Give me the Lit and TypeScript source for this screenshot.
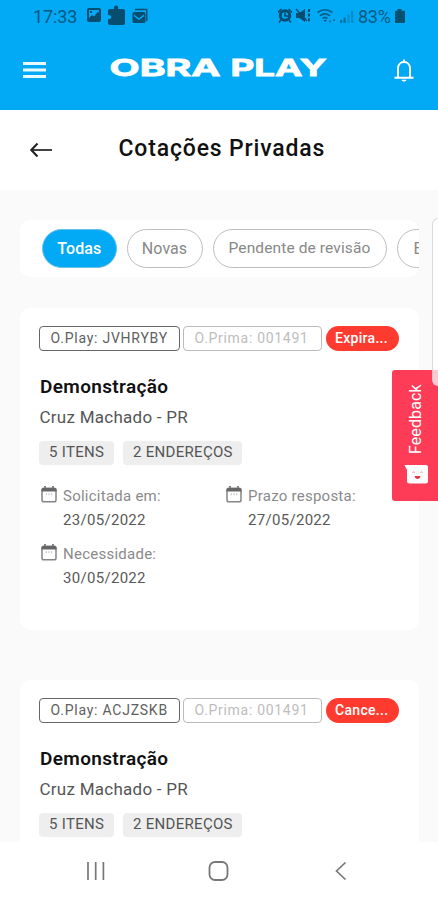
import { LitElement, html, css } from "lit";
import { customElement, property } from "lit/decorators.js";

const calendar = html`<svg width="16" height="17" viewBox="0 0 16 17" fill="none">
  <path d="M4 0v3M12 0v3" stroke="#666" stroke-width="1.6" />
  <rect x="1" y="2.2" width="14" height="13.6" rx="1.8" stroke="#858585" stroke-width="1.5" />
  <path d="M.5 4.100a2 2 0 0 1 2-2h11a2 2 0 0 1 2 2v1.500H.5z" fill="#666" />
  <path d="M5.300 7.200v2M8 7.200v2M10.700 7.200v2" stroke="#bbb" />
</svg>`;

@customElement("quote-card")
export class QuoteCard extends LitElement {
  @property() code = "";
  @property() status = "";

  static styles = css`
    :host { display: block; box-sizing: border-box; height: 322px; padding: 18px 19px 0; background: #fff; border-radius: 10px; }
    .tags { display: flex; height: 25px; }
    .tag { box-sizing: border-box; border: 1px solid #666; border-radius: 4px; font-size: 14px; line-height: 22px; color: #606060; white-space: nowrap; padding-left: 10.5px; }
    .play { width: 140.5px; letter-spacing: .76px; }
    .prima { width: 138.5px; margin-left: 3.500px; border-color: #bbb; color: #bdbdbd; letter-spacing: .7px; }
    .status { width: 73.500px; margin-left: 4px; border-radius: 13px; background: #ff3b2f; color: #fff; font-weight: 500; font-size: 14px; line-height: 24px; padding-left: 9.500px; box-sizing: border-box; letter-spacing: .3px; white-space: nowrap; }
    .name { margin-top: 24px; padding-left: 1px; font-size: 19px; line-height: 24px; font-weight: 600; color: #111; letter-spacing: .35px; }
    .place { margin-top: 6px; padding-left: .5px; font-size: 17px; line-height: 24px; color: #555; letter-spacing: .26px; }
    .chips { display: flex; gap: 9px; margin-top: 12px; }
    .chip { box-sizing: border-box; height: 24px; padding-left: 10px; background: #eee; border-radius: 4px; font-size: 15px; line-height: 23px; color: #555; letter-spacing: .3px; white-space: nowrap; }
    .items { width: 75px; }
    .ends { width: 119px; }
    .dates { display: grid; grid-template-columns: 185px 1fr; row-gap: 10px; margin-top: 19px; }
    .date { display: flex; gap: 6px; padding-left: 2px; font-size: 15px; line-height: 24px; color: #595959; letter-spacing: .3px; }
    .date svg { margin-top: 2px; }
    .label { color: #8a8a8a; letter-spacing: .25px; }
  `;

  private date(label: string, value: string) {
    return html`<div class="date">${calendar}<div><div class="label">${label}</div><div>${value}</div></div></div>`;
  }

  render() {
    return html`
      <div class="tags">
        <div class="tag play">O.Play: ${this.code}</div>
        <div class="tag prima">O.Prima: 001491</div>
        <div class="status">${this.status}</div>
      </div>
      <div class="name">Demonstração</div>
      <div class="place">Cruz Machado - PR</div>
      <div class="chips"><div class="chip items">5 ITENS</div><div class="chip ends">2 ENDEREÇOS</div></div>
      <div class="dates">
        ${this.date("Solicitada em:", "23/05/2022")}
        ${this.date("Prazo resposta:", "27/05/2022")}
        ${this.date("Necessidade:", "30/05/2022")}
      </div>`;
  }
}

@customElement("app-root")
export class AppRoot extends LitElement {
  static styles = css`
    :host { display: flex; flex-direction: column; position: relative; width: 438px; height: 900px; overflow: hidden; background: #fafafa; font-family: Roboto, "Liberation Sans", sans-serif; }
    .top { flex: none; height: 109.500px; background: #02a9f5; }
    .statusbar { display: flex; align-items: center; height: 32px; padding-left: 33px; color: #075980; font-size: 18px; }
    .time { width: 52px; letter-spacing: -.1px; }
    .left { width: 194px; }
    .right { width: 80px; margin-left: -1px; }
    .pct { width: 36px; letter-spacing: -.3px; }
    .appbar { display: flex; align-items: center; height: 76px; padding: 0 24px 0 23px; }
    .menu { width: 23px; }
    .logo { margin-left: 62px; overflow: visible; }
    .logo text { font-family: Inter, sans-serif; font-size: 23.500px; font-weight: 700; fill: #fff; stroke: #fff; stroke-width: .8px; }
    .bell { margin-left: 64px; }
    .title { flex: none; display: flex; align-items: center; box-sizing: border-box; height: 80px; padding-left: 29px; background: #fff; color: #111; }
    .title h1 { margin: 0 0 3px 65.500px; font-size: 23px; font-weight: 500; letter-spacing: .83px; white-space: nowrap; }
    main { flex: 1; min-height: 0; overflow: hidden; display: flex; flex-direction: column; padding: 30.500px 19px 0 20px; }
    .filters { flex: none; display: flex; gap: 10px; box-sizing: border-box; height: 57px; padding: 9px 0 0 22px; margin-bottom: 31px; border-radius: 10px; background: #fff; overflow: hidden; }
    .pill { flex: none; box-sizing: border-box; height: 39px; border: 1px solid #bdbdbd; border-radius: 20px; text-align: center; font-size: 16px; line-height: 37px; color: #888; letter-spacing: .05px; white-space: nowrap; }
    .w1 { width: 74.500px; background: #02a9f5; color: #fff; border-color: #68bfe8; font-weight: 500; }
    .w2 { width: 76px; }
    .w3 { width: 174px; font-size: 15.500px; letter-spacing: .12px; }
    .w4 { width: 90px; text-align: left; padding-left: 16px; }
    quote-card { flex: none; margin-bottom: 50px; }
    nav { flex: none; display: flex; align-items: center; height: 58px; background: #fff; padding-left: 86px; }
    .home { margin-left: 102px; }
    .back { margin-left: 105px; }
    .feedback { position: absolute; right: 0; top: 370px; width: 46px; height: 131px; border-radius: 3px 0 0 3px; background: #ff3c57; color: #fff; display: flex; flex-direction: column; align-items: center; box-sizing: border-box; padding-top: 14px; }
    .feedback span { height: 70px; writing-mode: vertical-rl; transform: rotate(180deg); font-size: 16px; line-height: 20px; text-align: left; letter-spacing: .1px; white-space: nowrap; margin-left: 2px; }
    .feedback svg { margin-top: 10px; margin-left: 2px; }
    .handle { position: absolute; top: 218px; left: 432px; width: 14px; height: 166px; background: rgba(255,255,255,.72); border: 1px solid rgba(205,205,205,.75); border-radius: 6px; }
  `;

  render() {
    return html`
      <div class="top">
        <div class="statusbar">
          <div class="time">17:33</div>
          <svg class="left" width="194" height="26" viewBox="0 0 194 26" fill="#064d70">
            <path fill-rule="evenodd" d="M4 5h10a2 2 0 0 1 2 2v10a2 2 0 0 1-2 2H4a2 2 0 0 1-2-2V7a2 2 0 0 1 2-2zm0 2v8l3-3 2 1.500 4-5L14 10V7zM5 8h2v2H5z" />
            <path d="M25 6h4c-.8-4.600 5-4.600 4.200 0H38a2 2 0 0 1 2 2v12a2 2 0 0 1-2 2H25a2 2 0 0 1-2-2v-4c4 1 5-4.500 0-4V8a2 2 0 0 1 2-2z" />
            <path fill-rule="evenodd" d="M49 9h10a1.500 1.500 0 0 1 1.500 1.500v8A1.500 1.500 0 0 1 59 20H49a1.500 1.500 0 0 1-1.500-1.500v-8A1.500 1.500 0 0 1 49 9zm0 2.500 5 3.700 5-3.700v1.800L54 17l-5-3.700z" />
            <path d="M50 6.500h11.800V18" fill="none" stroke="#064d70" stroke-width="1.300" />
          </svg>
          <svg class="right" width="80" height="26" viewBox="0 0 80 26" fill="#064d70">
            <circle cx="7" cy="12.500" r="4.700" fill="none" stroke="#064d70" stroke-width="3" />
            <path d="M0 9.500 3.500 6M14 9.500 10.500 6M3 17l-2 2.500M11 17l2 2.500M7 9.500V13h3" fill="none" stroke="#064d70" stroke-width="1.600" />
            <path d="M18 10h3.500L27 6v13l-5.500-4H18z" />
            <path d="m18 6 11 12" stroke="#064d70" stroke-width="1.500" />
            <path d="M31 6v13" stroke="#064d70" stroke-width="2" stroke-dasharray="3 1.600" />
            <g fill="none" stroke="#075f89" stroke-width="1.700"><path d="M39.500 9.500q7.500-5.500 15 0M42 12.700q5-3.600 10 0M44.500 15.700q2.500-2 5 0" /></g>
            <path d="m45.500 17 1.700 2 1.700-2z" /><path d="M51 18.500h2M55 17h2" stroke="#0777aa" stroke-width="2" />
            <path d="M62 17h2.300v3H62zM65.500 14.500h2.200V20h-2.200z" fill="#0771a2" />
            <path d="M69.500 11.500h2V20h-2zM73 8h2.300v12H73z" fill="#078cca" />
          </svg>
          <div class="pct">83%</div>
          <svg width="12" height="18" viewBox="0 0 12 18" fill="#06516f"><path d="M3.500 2h4v1.700H10a1 1 0 0 1 1 1V15a1 1 0 0 1-1 1H2a1 1 0 0 1-1-1V4.700a1 1 0 0 1 1-1h1.500z" /></svg>
        </div>
        <div class="appbar">
          <svg class="menu" width="23" height="20" viewBox="0 0 23 20"><path d="M0 3.500h23M0 10h23M0 16.500h23" stroke="#e9faff" stroke-width="2.900" /></svg>
          <svg class="logo" width="222" height="32" viewBox="0 0 222 32">
            <text x="1.500" y="22.300" textLength="111" lengthAdjust="spacingAndGlyphs">OBRA</text>
            <text x="122.500" y="22.300" textLength="96" lengthAdjust="spacingAndGlyphs">PLAY</text>
          </svg>
          <svg class="bell" width="20" height="26" viewBox="0 0 20 26" fill="none"><path d="M4 20v-8.500C4 7.700 6.500 5 10 5s6 2.700 6 6.500V20" stroke="#fff" stroke-width="2" /><path d="M.5 20.700h19M10 2.500V5" stroke="#fff" stroke-width="2.100" /><path d="M7.300 22.700h5.400c-.8 2.400-4.600 2.400-5.400 0z" fill="#fff" /></svg>
        </div>
      </div>
      <div class="title">
        <svg width="24" height="18" viewBox="0 0 24 18" fill="none" stroke="#222"><path d="M2 9h21" stroke-width="1.700" /><path d="M8.500 2.500 2.300 9l6.200 6.500" stroke-width="2.100" /></svg>
        <h1>Cotações Privadas</h1>
      </div>
      <main>
        <div class="filters">
          <div class="pill w1">Todas</div>
          <div class="pill w2">Novas</div>
          <div class="pill w3">Pendente de revisão</div>
          <div class="pill w4">E</div>
        </div>
        <quote-card code="JVHRYBY" status="Expira..."></quote-card>
        <quote-card code="ACJZSKB" status="Cance..."></quote-card>
      </main>
      <nav>
        <svg width="20" height="20" viewBox="0 0 20 20"><path d="M2 1v18M9.700 1v18M17.400 1v18" stroke="#777" stroke-width="1.700" /></svg>
        <svg class="home" width="22" height="22" viewBox="0 0 22 22"><rect x="1.500" y="2" width="18" height="18" rx="5.500" fill="none" stroke="#777" stroke-width="1.800" /></svg>
        <svg class="back" width="12" height="20" viewBox="0 0 12 20"><path d="M10.500 1.500 1.500 10l9 8.500" fill="none" stroke="#777" stroke-width="1.700" /></svg>
      </nav>
      <div class="feedback">
        <span>Feedback</span>
        <svg width="25" height="20" viewBox="0 0 25 20"><path d="M.5 1H22a2 2 0 0 1 2 2v14a2.500 2.500 0 0 1-2.500 2.500h-16A2.500 2.500 0 0 1 3 17V6z" fill="#fff" /><path d="M8.500 8.500q1-1.300 2 0M16.500 8.500q1-1.300 2 0" fill="none" stroke="#ff7185" /><path d="M10.500 12h6c-.7 4-5.300 4-6 0z" fill="#e83545" /></svg>
      </div>
      <div class="handle"></div>`;
  }
}
